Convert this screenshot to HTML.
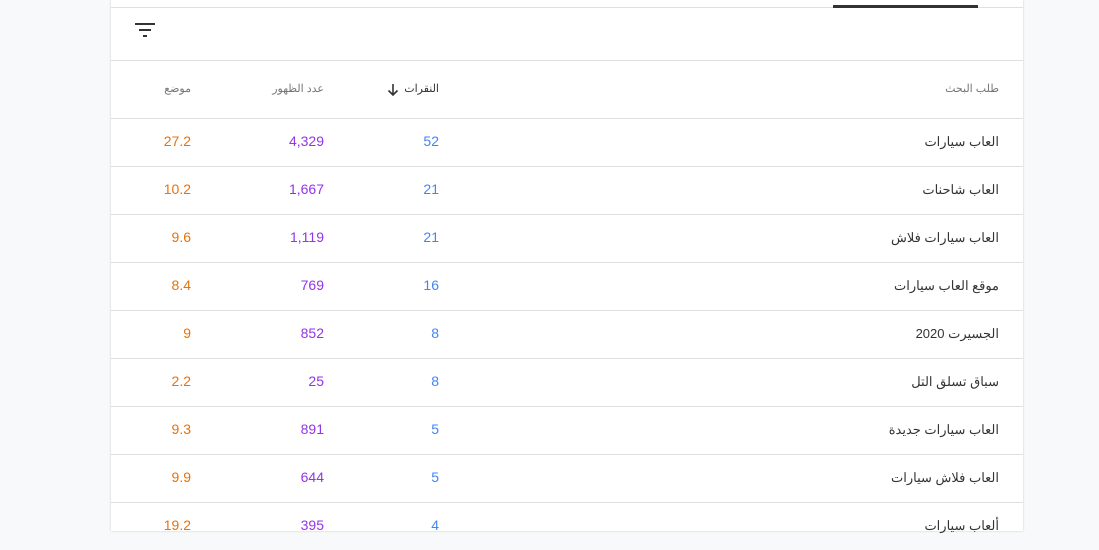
<!DOCTYPE html>
<html><head><meta charset="utf-8"><style>
body{margin:0;width:1099px;height:531px;background:#f8f9fa;overflow:hidden;font-family:"Liberation Sans","Noto Sans CJK SC",sans-serif;}
.card{position:absolute;left:111px;top:0;width:912px;height:531px;background:#fff;box-shadow:0 0 2px rgba(0,0,0,.2);}
.tabline{position:absolute;left:722px;top:5px;width:145px;height:3px;background:#333;}
.top{position:absolute;left:0;top:7px;width:912px;height:1px;background:#e0e0e0;}
.filter{position:absolute;left:24px;top:23px;}
.row{position:absolute;left:0;width:912px;border-top:1px solid #e0e0e0;font-size:14px;}
.row span{position:absolute;top:0;}
.q{right:24px;color:#333;direction:rtl;font-size:13px;}
.c{right:584px;color:#4285f4;}
.i{right:699px;color:#9334e6;}
.p{right:832px;color:#e8710a;}
.h span{color:#757575;font-size:11px;}
</style></head><body>
<div class="card">
<div class="top"></div><div class="tabline"></div>
<svg class="filter" width="20" height="14" viewBox="0 0 20 14"><path d="M0 1h20M4 7h12M8 13h4" stroke="#333" stroke-width="2"/></svg>
<div class="row h" style="top:60px;height:58px;line-height:56px">
<span class="q" style="color:#757575;font-size:11px">طلب البحث</span>
<span class="c" style="color:#333">النقرات</span>
<svg style="position:absolute;right:624px;top:22px" width="12" height="14" viewBox="0 0 12 14"><path d="M6 1v11M1.5 7.5l4.5 4.5 4.5-4.5" stroke="#333" stroke-width="1.6" fill="none"/></svg>
<span class="i">عدد الظهور</span>
<span class="p">موضع</span>
</div>
<div class="row" style="top:118px;height:47px;line-height:45px"><span class="q">العاب سيارات</span><span class="c">52</span><span class="i">4,329</span><span class="p">27.2</span></div>
<div class="row" style="top:166px;height:47px;line-height:45px"><span class="q">العاب شاحنات</span><span class="c">21</span><span class="i">1,667</span><span class="p">10.2</span></div>
<div class="row" style="top:214px;height:47px;line-height:45px"><span class="q">العاب سيارات فلاش</span><span class="c">21</span><span class="i">1,119</span><span class="p">9.6</span></div>
<div class="row" style="top:262px;height:47px;line-height:45px"><span class="q">موقع العاب سيارات</span><span class="c">16</span><span class="i">769</span><span class="p">8.4</span></div>
<div class="row" style="top:310px;height:47px;line-height:45px"><span class="q">الجسيرت 2020</span><span class="c">8</span><span class="i">852</span><span class="p">9</span></div>
<div class="row" style="top:358px;height:47px;line-height:45px"><span class="q">سباق تسلق التل</span><span class="c">8</span><span class="i">25</span><span class="p">2.2</span></div>
<div class="row" style="top:406px;height:47px;line-height:45px"><span class="q">العاب سيارات جديدة</span><span class="c">5</span><span class="i">891</span><span class="p">9.3</span></div>
<div class="row" style="top:454px;height:47px;line-height:45px"><span class="q">العاب فلاش سيارات</span><span class="c">5</span><span class="i">644</span><span class="p">9.9</span></div>
<div class="row" style="top:502px;height:47px;line-height:45px"><span class="q">ألعاب سيارات</span><span class="c">4</span><span class="i">395</span><span class="p">19.2</span></div>
</div>
</body></html>
